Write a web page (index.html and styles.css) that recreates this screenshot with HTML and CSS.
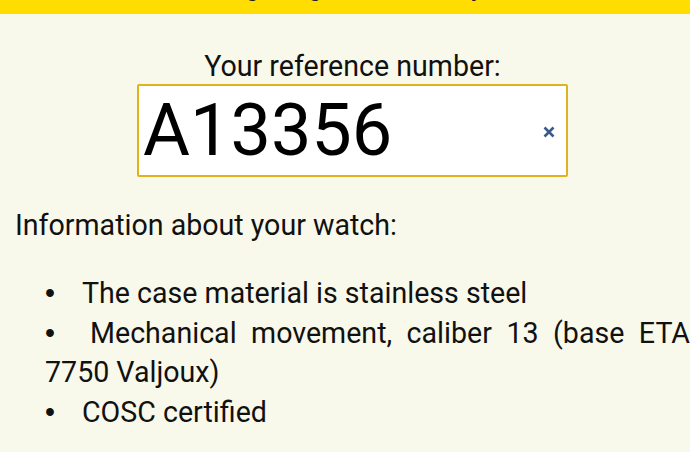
FILE: index.html
```html
<!DOCTYPE html>
<html>
<head>
<meta charset="utf-8">
<link rel="stylesheet" href="styles.css">
</head>
<body>
<header class="topbar"><h1 class="title">Checking the age of the watch by</h1></header>
<main class="content">
  <section class="lookup">
    <p class="lookup-label">Your reference number:</p>
    <div class="ref-box">
      <span class="ref-value">A13356</span>
      <svg class="ref-clear" width="12" height="12" viewBox="0 0 12 12" aria-label="clear"><path d="M1.5 1.5 L10.5 10.5 M10.5 1.5 L1.5 10.5" stroke="#3b5a8c" stroke-width="2.6" stroke-linecap="butt" fill="none"/></svg>
    </div>
  </section>
  <p class="info-heading">Information about your watch:</p>
  <ul class="facts">
    <li class="fact"><span class="dot">&bull;</span>The case material is stainless steel</li>
    <li class="fact"><span class="dot dot-wide">&bull;</span>Mechanical movement, caliber 13 (base ETA 7750 Valjoux)</li>
    <li class="fact"><span class="dot">&bull;</span>COSC certified</li>
  </ul>
</main>
</body>
</html>
```
FILE: styles.css
```css
html, body {
  margin: 0;
  padding: 0;
}
body {
  background: #f9f9eb;
  font-family: Roboto, "Noto Sans", sans-serif;
  color: #111;
  width: 690px;
  height: 452px;
  overflow: hidden;
}
.topbar {
  background: #ffdd00;
  height: 14px;
  overflow: hidden;
  text-align: center;
}
.title {
  margin: -22px 0 0 0;
  padding-right: 42px;
  font-size: 22px;
  line-height: 22px;
  font-weight: 700;
  color: #222;
  word-spacing: -2px;
}
.content {
  padding: 0 0 0 15px;
}
.lookup {
  display: flex;
  flex-direction: column;
  align-items: center;
}
.lookup-label {
  margin: 34px 0 0 0;
  font-size: 28.6px;
  line-height: 36px;
}
.ref-box {
  box-sizing: border-box;
  margin: 0;
  width: 431px;
  height: 93px;
  background: #fff;
  border: 2px solid #e0b31e;
  border-radius: 2px;
  display: flex;
  align-items: center;
  justify-content: space-between;
  padding: 0 11px 0 4px;
}
.ref-value {
  font-size: 72px;
  line-height: 80px;
  color: #000;
}
.ref-clear {
  display: block;
  margin-top: 2px;
}
.info-heading {
  margin: 30px 0 0 0;
  font-size: 28.6px;
  line-height: 36px;
}
.facts {
  list-style: none;
  margin: 31px 0 0 30px;
  padding: 0;
}
.fact {
  font-size: 28.6px;
  line-height: 39.5px;
  text-align: justify;
}
.dot {
  display: inline-block;
  width: 37px;
  font-family: "Liberation Sans", sans-serif;
}
.dot-wide {
  width: 45px;
}
```
